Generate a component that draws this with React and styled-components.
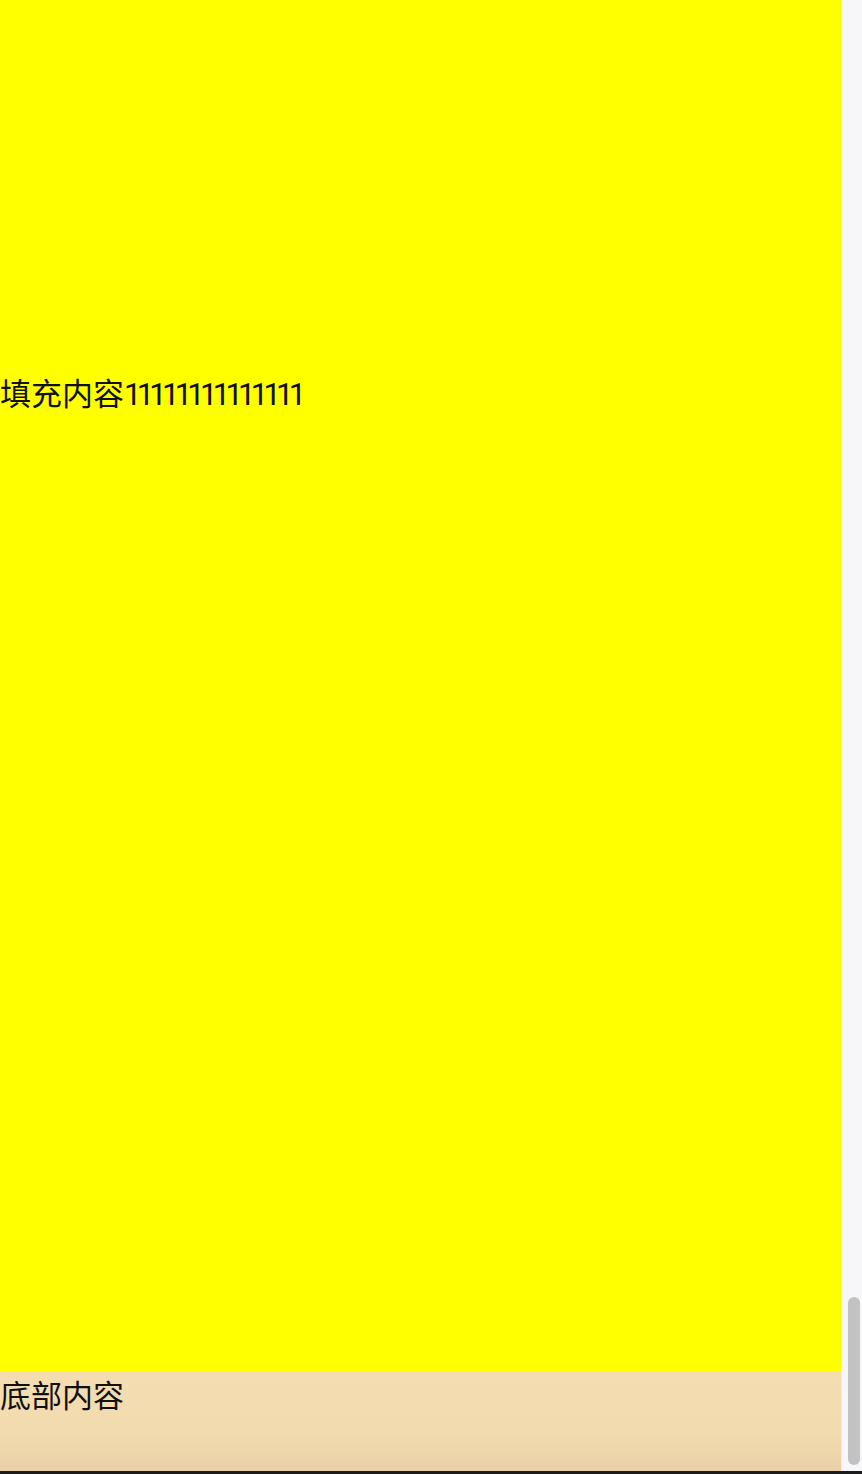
import styled, { createGlobalStyle } from 'styled-components'

const GlobalStyle = createGlobalStyle`
  html, body {
    margin: 0;
    padding: 0;
    overflow: hidden;
  }
  body {
    font-family: "Noto Sans CJK SC", "Noto Sans", sans-serif;
    color: #111;
  }
`

const Page = styled.div`
  display: flex;
  flex-direction: column;
  width: 862px;
  height: 1474px;
`

const Window = styled.div`
  display: flex;
  flex: 1;
  min-height: 0;
`

const Main = styled.div`
  display: flex;
  flex-direction: column;
  flex: 1;
`

const Content = styled.section`
  flex: 1;
  background: #ffff00;
  padding-top: 370px;
`

const Line = styled.p`
  margin: 0;
  font-size: 31px;
  line-height: 44px;
`

const Digits = styled.span`
  font-family: Roboto, "Noto Sans CJK SC", sans-serif;
  letter-spacing: ${(p) => p.$tight}px;
`

const Footer = styled.footer`
  height: 99px;
  background: linear-gradient(180deg, #f5ddb2 0%, #f3dbb0 60%, #e9d0a6 100%);
  box-sizing: border-box;
`

const ScrollTrack = styled.div`
  display: flex;
  flex-direction: column;
  justify-content: flex-end;
  width: 21px;
  background: #f7f7f9;
  border-left: 1px solid #ececee;
  box-sizing: border-box;
  padding: 0 2px 6px 6px;
`

const Thumb = styled.div`
  height: 168px;
  background: #c2c2c2;
  border-radius: 6px;
`

const Edge = styled.div`
  height: 3px;
  background: #1b1b1d;
`

export default function App() {
  return (
    <>
      <GlobalStyle />
      <Page>
        <Window>
          <Main>
            <Content>
              <Line>
                填充内容<Digits $tight={-4.75}>11111111111111</Digits>
              </Line>
            </Content>
            <Footer>
              <Line>底部内容</Line>
            </Footer>
          </Main>
          <ScrollTrack>
            <Thumb />
          </ScrollTrack>
        </Window>
        <Edge />
      </Page>
    </>
  )
}
